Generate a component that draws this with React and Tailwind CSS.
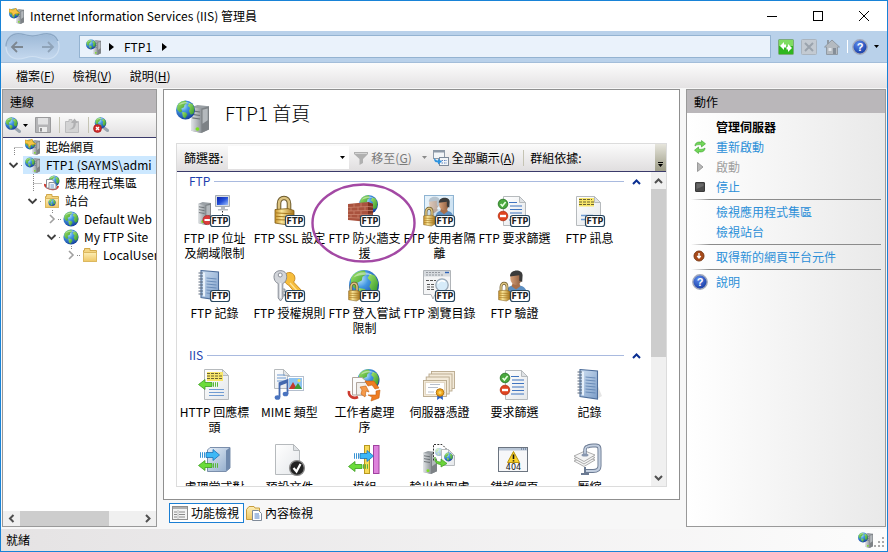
import React from "react";

/* ---------- shared drawing parts ---------- */

function Defs() {
  return (
    <svg className="absolute h-0 w-0" aria-hidden="true">
      <defs>
        <radialGradient id="sea" cx="35%" cy="28%" r="75%">
          <stop offset="0" stopColor="#c8ecfd" />
          <stop offset="0.4" stopColor="#4296e2" />
          <stop offset="1" stopColor="#153f9c" />
        </radialGradient>
        <linearGradient id="land" x1="0" y1="0" x2="1" y2="1">
          <stop offset="0" stopColor="#a4e66c" />
          <stop offset="1" stopColor="#2f9428" />
        </linearGradient>
        <linearGradient id="steel" x1="0" y1="0" x2="1" y2="0">
          <stop offset="0" stopColor="#e3e6e8" />
          <stop offset="1" stopColor="#90969b" />
        </linearGradient>
        <linearGradient id="gold" x1="0" y1="0" x2="1" y2="0">
          <stop offset="0" stopColor="#c8922a" />
          <stop offset="0.35" stopColor="#fbe79a" />
          <stop offset="1" stopColor="#a8741a" />
        </linearGradient>
        <linearGradient id="screen" x1="0" y1="0" x2="1" y2="1">
          <stop offset="0" stopColor="#0a1fa8" />
          <stop offset="0.5" stopColor="#2450d8" />
          <stop offset="1" stopColor="#9cc0ff" />
        </linearGradient>
        <linearGradient id="paper" x1="0" y1="0" x2="1" y2="1">
          <stop offset="0" stopColor="#ffffff" />
          <stop offset="1" stopColor="#e4e7ea" />
        </linearGradient>
        <linearGradient id="book" x1="0" y1="0" x2="1" y2="1">
          <stop offset="0" stopColor="#cfe0f2" />
          <stop offset="1" stopColor="#7c9dc8" />
        </linearGradient>
        <linearGradient id="folder" x1="0" y1="0" x2="0" y2="1">
          <stop offset="0" stopColor="#fdeeb5" />
          <stop offset="1" stopColor="#eec766" />
        </linearGradient>
        <linearGradient id="skin" x1="0" y1="0" x2="1" y2="0">
          <stop offset="0" stopColor="#d9a27a" />
          <stop offset="1" stopColor="#8a5a3c" />
        </linearGradient>
        <linearGradient id="bluebox" x1="0" y1="0" x2="1" y2="1">
          <stop offset="0" stopColor="#e6eef7" />
          <stop offset="1" stopColor="#8ea9ca" />
        </linearGradient>
        <radialGradient id="help" cx="40%" cy="30%" r="75%">
          <stop offset="0" stopColor="#5c8bee" />
          <stop offset="1" stopColor="#12369f" />
        </radialGradient>
        <linearGradient id="pill" x1="0" y1="0" x2="0" y2="1">
          <stop offset="0" stopColor="#9cb8d6" />
          <stop offset="1" stopColor="#c4d8ee" />
        </linearGradient>
      </defs>
    </svg>
  );
}

function Globe({ cx, cy, r }) {
  return (
    <g transform={`translate(${cx} ${cy}) scale(${r / 10})`}>
      <circle r="10" fill="url(#sea)" />
      <path d="M-8.6 -4.5 C-6.5 -8.5 -2.5 -9.8 0.5 -9.6 L1.5 -7 L-1 -5.5 L-1.5 -3 L-4.5 -1.5 L-3.5 1.5 L-6 2.5 L-8.8 -0.5 Z" fill="url(#land)" />
      <path d="M-3.5 2 L0.5 2.6 L2 5 L-0.5 9 L-2.8 7.2 Z" fill="url(#land)" />
      <path d="M4 -7.5 L7.4 -6.2 L9.4 -1.8 L8.6 3.6 L5.6 5 L3.6 1 L4.8 -2 L2.4 -4.6 Z" fill="url(#land)" />
      <path d="M-7 -5 C-4.5 -9 2 -9.5 5.5 -6.5 C2 -7.3 -3.5 -7 -7 -5 Z" fill="#fff" opacity="0.45" />
    </g>
  );
}

function Server({ x, y, w, h }) {
  return (
    <g transform={`translate(${x} ${y}) scale(${w / 14} ${h / 24})`}>
      <path d="M0 2 L5 0 L14 1 L14 21 L8 24 L0 22 Z" fill="#9aa0a5" />
      <path d="M0 2 L8 3 L8 24 L0 22 Z" fill="url(#steel)" />
      <path d="M1 5 L7 6 M1 8 L7 9 M1 11 L7 12" stroke="#6c7276" strokeWidth="1" />
      <path d="M8 3 L14 1 L14 21 L8 24 Z" fill="#7d8286" />
      <path d="M9 4 L13 3 L13 13 L9 16 Z" fill="#b4b9bd" />
      <circle cx="5" cy="20.5" r="1.5" fill="#7be01e" />
    </g>
  );
}

function Lock({ x, y, w, h }) {
  return (
    <g transform={`translate(${x} ${y}) scale(${w / 20} ${h / 30})`}>
      <path d="M5 16 V8 C5 0 15 0 15 8 V16" fill="none" stroke="#6c5a2c" strokeWidth="4.6" />
      <path d="M5 16 V8 C5 0 15 0 15 8 V16" fill="none" stroke="#dcc380" strokeWidth="2.6" />
      <path d="M1 14 L14 13 L20 15 L20 27 L14 30 L1 28 Z" fill="url(#gold)" stroke="#7c5a14" strokeWidth="0.8" />
      <path d="M2 17.5 L19 18.5 M2 21 L19 22 M2 24.5 L19 25" stroke="#a5771f" strokeWidth="1" />
    </g>
  );
}

function Sheet({ x, y, w, h }) {
  const f = 6;
  return (
    <g>
      <path d={`M${x} ${y} H${x + w - f} L${x + w} ${y + f} V${y + h} H${x} Z`} fill="url(#paper)" stroke="#b6babd" strokeWidth="1" />
      <path d={`M${x + w - f} ${y} V${y + f} H${x + w} Z`} fill="#dfe2e5" stroke="#b6babd" strokeWidth="1" />
    </g>
  );
}

function FtpBadge() {
  return (
    <g>
      <rect x="12.5" y="20.5" width="19" height="11" rx="2.5" fill="#fff" stroke="#27465f" strokeWidth="1.2" />
      <text x="22" y="29" textAnchor="middle" fontSize="8" fontWeight="700" fontFamily="'DejaVu Sans', sans-serif" fill="#222">FTP</text>
    </g>
  );
}

function Person({ x, y, s = 1, shirt = "#5d8fc2", hair = "#3b3b3b" }) {
  return (
    <g transform={`translate(${x} ${y}) scale(${s})`}>
      <path d="M-9 21 C-9 13 -5 12 0 12 C6 12 10 14 10 21 Z" fill={shirt} />
      <path d="M-3 10 L3 10 L4 13 L0 16 L-4 13 Z" fill="#a86f4a" />
      <ellipse cx="0" cy="5.5" rx="5.2" ry="6.3" fill="url(#skin)" />
      <path d="M-5.4 4 C-6 -2.5 6 -3.5 6 3 L5.6 9 L3 8 L3 3 Z" fill={hair} />
    </g>
  );
}

function GreenArrow({ x, y }) {
  return (
    <g transform={`translate(${x} ${y})`}>
      <path d="M0.5 5.5 L7 0.5 V3.5 H14 V7.5 H7 V10.5 Z" fill="#6bdc3a" stroke="#3c9c22" strokeWidth="0.8" />
      <path d="M15.5 3.2 V7.8 M17.5 3.2 V7.8 M19.5 3.2 V7.8" stroke="#58b83a" strokeWidth="1" />
    </g>
  );
}

function BlueArrow({ x, y }) {
  return (
    <g transform={`translate(${x} ${y})`}>
      <path d="M19.5 6 L13 0.5 V3.5 H6 V8.5 H13 V11.5 Z" fill="#3db8f6" stroke="#1b71b8" strokeWidth="0.8" />
      <path d="M0.5 3.2 V8.8 M2.5 3.2 V8.8 M4.5 3.2 V8.8" stroke="#3a94d4" strokeWidth="1" />
    </g>
  );
}

function Notebook({ x, y }) {
  return (
    <g transform={`translate(${x} ${y})`}>
      <path d="M17 8 L25 27 L20 30 Z" fill="#000" opacity="0.1" />
      <path d="M3 0.5 L20.5 2 V30 L3 27.5 Z" fill="url(#book)" stroke="#4d6d9a" strokeWidth="1.1" />
      <path d="M5 2.5 L7 2.8 V26.5 L5 26.2 Z" fill="#e8f1fa" />
      <path d="M8.5 8 L18.5 9 M8.5 11 L18.5 12 M8.5 14 L18.5 15 M8.5 17 L18.5 18 M8.5 20 L18.5 21 M8.5 23 L18.5 24" stroke="#5b7fae" strokeWidth="0.8" />
      <path d="M0.5 3 H5 M0.5 6 H5 M0.5 9 H5 M0.5 12 H5 M0.5 15 H5 M0.5 18 H5 M0.5 21 H5 M0.5 24 H5" stroke="#5c6a7c" strokeWidth="1.1" />
    </g>
  );
}

function CheckList({ x }) {
  return (
    <g transform={`translate(${x} 0)`}>
      <Sheet x={5.5} y={1.5} w={22} h={29} />
      <path d="M11 7.5 H19 M12 11 H24 M12 14.5 H24 M12 18 H24 M12 21.5 H24 M11 25 H24" stroke="#3f74c0" strokeWidth="1.1" />
      <circle cx="5" cy="9" r="4.8" fill="#4aa83e" stroke="#23701f" strokeWidth="0.8" />
      <path d="M2.6 9 L4.4 11 L7.6 7" fill="none" stroke="#e8ffe0" strokeWidth="1.6" />
      <circle cx="5" cy="21" r="4.8" fill="#e0431f" stroke="#b03418" strokeWidth="0.8" />
      <rect x="2" y="19.8" width="6" height="2.4" fill="#fff" />
    </g>
  );
}

/* ---------- feature icons ---------- */

const ART = {
  ipRestrict: (
    <g>
      <Server x={0} y={7} w={13} h={23} />
      <path d="M17.5 0.5 H31.5 V11.5 H17.5 Z" fill="#d8dde2" stroke="#a5acb3" />
      <rect x="19" y="2" width="11" height="8" fill="url(#screen)" />
      <path d="M23 12 H27 V14 H30 V15.5 H20 V14 H23 Z" fill="#b6bcc2" />
      <path d="M24.5 16 V21" stroke="#333" strokeDasharray="1.5 1.5" />
      <circle cx="9.5" cy="25" r="4.6" fill="#dc3c3c" stroke="#a82424" strokeWidth="0.7" />
      <rect x="6.5" y="24" width="6" height="2" fill="#fff" />
      <FtpBadge />
    </g>
  ),
  ssl: <g><Lock x={1} y={1} w={20} h={29} /><FtpBadge /></g>,
  firewall: (
    <g>
      <Globe cx={20.5} cy={9.5} r={9.5} />
      <path d="M0 9 L20 7 L25 9 V24 L20 27 L0 25 Z" fill="#a9523e" />
      <path d="M20 7 L25 9 V24 L20 27 Z" fill="#7d3222" />
      <path d="M0 12.5 L20 11.5 L25 12 M0 16 L20 15.5 L25 15.5 M0 19.5 L20 19.5 L25 19 M0 22.5 L20 23.5 L25 22 M6 8.5 V12 M13 8 V12 M3 12.5 V16 M10 12 V16 M17 12 V15.5 M6 16 V19.5 M13 16 V19.5 M3 19.5 V22.5 M10 19.5 V23" stroke="#cf8a74" strokeWidth="0.7" fill="none" />
      <FtpBadge />
    </g>
  ),
  isolation: (
    <g>
      <rect x="1.5" y="0.5" width="29" height="25" fill="#cfe3f2" stroke="#8fb4d2" />
      <path d="M2 1 H30 L18 14 H2 Z" fill="#e4f1fa" />
      <g opacity="0.5"><Person x={11} y={3} s={0.95} shirt="#c9d6e0" hair="#8a98a5" /></g>
      <Person x={21} y={4} s={0.95} />
      <Lock x={0} y={12} w={12} h={19} />
      <FtpBadge />
    </g>
  ),
  ftpFilter: <g><CheckList x={0} /><FtpBadge /></g>,
  message: (
    <g>
      <Sheet x={3.5} y={1.5} w={24} h={29} />
      <rect x="6" y="3" width="15" height="8.5" fill="#f8e66a" />
      <path d="M6 4.5 H19 M6 7 H22 M6 9.5 H22" stroke="#6b6434" strokeWidth="1" strokeDasharray="3 1" />
      <path d="M8 20.5 H20 M8 24.5 H14" stroke="#6f9bd2" strokeWidth="1.3" />
      <FtpBadge />
    </g>
  ),
  ftpLog: <g><Notebook x={0} y={0} /><FtpBadge /></g>,
  keys: (
    <g>
      <path d="M12 5 C14 1 20 2 21.5 6 C22.5 9 21.5 11 20.5 12 L30 22 L29 26 L24 25 L15.5 15 C12 14 10.5 9 12 5 Z" fill="#f6bd3c" stroke="#c4841a" strokeWidth="0.9" />
      <path d="M17 13 L26 23" stroke="#fde39a" strokeWidth="1.2" />
      <path d="M2 3 C5 -0.5 11 0 13 3.5 C14.5 7 13.5 12 9.8 13.5 V28 L7.5 31 L5.2 28 V13.5 C1 12 0 6.5 2 3 Z" fill="#d2d5da" stroke="#80858e" strokeWidth="0.9" />
      <circle cx="7.2" cy="5" r="2" fill="#fff" stroke="#80858e" strokeWidth="0.9" />
      <path d="M7.5 13 V28" stroke="#f4f5f7" strokeWidth="1.2" />
      <path d="M9.8 19 H12 V22 H9.8 M9.8 24 H11.5 V26 H9.8" fill="#c2c5ca" stroke="#80858e" strokeWidth="0.8" />
      <FtpBadge />
    </g>
  ),
  logon: <g><Globe cx={16} cy={15} r={15} /><Lock x={0} y={12} w={12} h={19} /><FtpBadge /></g>,
  browse: (
    <g>
      <path d="M0.5 0.5 H27.5 V24.5 H12 L10 29 L8 24.5 H0.5 Z" fill="#f4f5f6" stroke="#b0b4b8" />
      <rect x="1" y="1" width="26" height="5.5" fill="#d6dade" />
      <path d="M3 2.5 H17 M3 5 H20" stroke="#8d9299" strokeWidth="0.9" strokeDasharray="2 1" />
      <path d="M22 2.5 H26" stroke="#2c62b8" strokeWidth="1.4" />
      <path d="M3 10.5 H13 M4 14.5 H11 M4 17 H11 M4 19.5 H11" stroke="#555" strokeWidth="1" strokeDasharray="3 1" />
      <circle cx="19" cy="15" r="6.2" fill="#d3eafa" fillOpacity="0.9" stroke="#9aa8b6" strokeWidth="1.3" />
      <path d="M15 13.5 C16 10.5 20 10 22 12" stroke="#fff" strokeWidth="1.5" fill="none" />
      <FtpBadge />
    </g>
  ),
  auth: <g><Person x={18} y={2} s={1.1} /><Lock x={0} y={12} w={12} h={19} /><FtpBadge /></g>,
  httpHeaders: (
    <g>
      <Sheet x={6.5} y={0.5} w={24} h={30} />
      <rect x="9" y="3" width="16" height="9" fill="#f8e66a" />
      <path d="M9 4.5 H22 M9 7 H25 M9 9.5 H25" stroke="#6b6434" strokeWidth="1" strokeDasharray="3 1" />
      <path d="M11 20.5 H26 M11 23.5 H26 M11 26.5 H26" stroke="#6f9bd2" strokeWidth="1.2" />
      <GreenArrow x={0} y={10} />
    </g>
  ),
  mime: (
    <g>
      <Sheet x={1.5} y={0.5} w={15} h={19} />
      <path d="M4 6 H12 M4 9 H13 M4 12 H13" stroke="#6f9bd2" />
      <rect x="14.5" y="7.5" width="16" height="14" fill="#fff" stroke="#b4bfce" />
      <rect x="16" y="9" width="13" height="11" fill="#8dc3f0" />
      <path d="M16 20 L20 13 L24 20 Z" fill="#c43a2c" />
      <path d="M21 20 L25 14 L29 20 Z" fill="#3c9a34" />
      <circle cx="26" cy="11.5" r="1.5" fill="#fbe35a" />
      <path d="M6.5 28 V14 L14.5 11 V25" fill="none" stroke="#4468ae" strokeWidth="1.8" />
      <path d="M6.5 15.5 L14.5 12.5" stroke="#4468ae" strokeWidth="2.6" />
      <ellipse cx="4.5" cy="28.5" rx="2.8" ry="2.3" fill="#4a74c0" />
      <ellipse cx="12.5" cy="25" rx="2.8" ry="2.3" fill="#4a74c0" />
    </g>
  ),
  worker: (
    <g>
      <Globe cx={20.5} cy={11} r={11} />
      <path d="M1 22 C0 28 6 30 10 28" fill="none" stroke="#cc3a2e" strokeWidth="2.6" />
      <path d="M4.5 8.5 H14 L18 12 V26 H4.5 Z" fill="#fbfbfb" stroke="#b0a59c" />
      <path d="M8.5 13.5 H18 L20 16 V26 H8.5 Z" fill="#f1efec" stroke="#b0a59c" />
      <circle cx="22" cy="21.5" r="6" fill="#fff" />
      <path d="M17 12 L26 12 L31 19 L27 20 L24 16 L20 17 Z" fill="#ef7d22" stroke="#c4600f" strokeWidth="0.6" />
      <path d="M32 21 L31 29 L23 32 L24 28 L20 26 L28 26 L28 22 Z" fill="#ef7d22" stroke="#c4600f" strokeWidth="0.6" />
      <path d="M12 18 L18 17 L21 23 L18 22 L17 28 L13 25 L14 21 Z" fill="#f59a4a" stroke="#c4600f" strokeWidth="0.6" />
    </g>
  ),
  certs: (
    <g fill="#f3ead9" stroke="#b8a88c" strokeWidth="0.9">
      <rect x="8.5" y="2.5" width="23" height="17" />
      <rect x="6" y="5" width="23" height="17" />
      <rect x="3.2" y="8" width="23" height="17" />
      <rect x="0.5" y="11.5" width="23" height="16" />
      <rect x="2.5" y="13.5" width="19" height="12" fill="#fff" stroke="#e0d6c2" />
      <path d="M7 15.5 H17 M5 18.5 H15 M5 23 H11" stroke="#b0b8c6" />
      <path d="M14.5 25 L14 31 L17 29 L20 31 L19.5 25 Z" fill="#2b63c6" stroke="none" />
      <circle cx="17" cy="23.5" r="3.8" fill="#f0a81e" stroke="#b06c08" />
      <circle cx="17" cy="23.5" r="1.5" fill="#fbd56a" stroke="none" />
    </g>
  ),
  filter: <CheckList x={2} />,
  log: <Notebook x={4} y={0} />,
  handler: (
    <g>
      <path d="M9.5 6 L12 3.5 H32 V24 L28 27.5 H9.5 Z" fill="url(#bluebox)" stroke="#7b8fac" />
      <path d="M28 6.5 V27 L32 24 V3.5 Z" fill="#6f89ad" />
      <BlueArrow x={2} y={5} />
      <GreenArrow x={0} y={16} />
    </g>
  ),
  defaultDoc: (
    <g>
      <Sheet x={2.5} y={0.5} w={24} h={30} />
      <circle cx="24" cy="24" r="7.4" fill="#222" stroke="#8b8b8b" strokeWidth="1.4" />
      <path d="M20.5 24 L23.5 27.5 L27.5 20" fill="none" stroke="#fff" strokeWidth="2.2" />
    </g>
  ),
  modules: (
    <g>
      <rect x="16.5" y="1.5" width="5" height="28" fill="#f7da58" stroke="#b8981e" />
      <rect x="25.5" y="1.5" width="5.5" height="28" fill="#de82dc" stroke="#a042a0" />
      <BlueArrow x={6} y={6} />
      <GreenArrow x={0} y={17} />
    </g>
  ),
  cache: (
    <g>
      <Server x={0} y={7} w={14} h={23} />
      <path d="M10.5 16.5 V0.5 H19 L23.5 5 V8" fill="#fff" stroke="#333" strokeDasharray="2 1.3" />
      <g opacity="0.4"><Globe cx={16} cy={8} r={4} /></g>
      <Sheet x={18.5} y={5.5} w={13} h={16} />
      <Globe cx={25.5} cy={13} r={4.4} />
      <path d="M12 13 C12 17 15 18 18 18 V15 L24 19.5 L18 23 V20.5 C14 20.5 11 18 12 13 Z" fill="#6bd33a" stroke="#3c9c22" strokeWidth="0.7" />
    </g>
  ),
  error404: (
    <g>
      <rect x="0.5" y="3.5" width="29" height="24" fill="#f6f7f9" stroke="#6b7480" />
      <rect x="1" y="4" width="28" height="2.5" fill="#b9c6d6" />
      <path d="M23 5 H28" stroke="#445a7c" strokeDasharray="1 1" />
      <path d="M15.5 7.5 L21.5 18.5 H9.5 Z" fill="#fbd32c" stroke="#b8940f" strokeLinejoin="round" />
      <path d="M15.5 10.5 V15 M15.5 16.2 V17.5" stroke="#111" strokeWidth="1.6" />
      <text x="15.5" y="26" textAnchor="middle" fontSize="8" fontFamily="'DejaVu Sans', sans-serif" fill="#111">404</text>
    </g>
  ),
  compress: (
    <g>
      <path d="M14 3.5 C15 1.5 18 1.5 20 1.5 H23 C26.5 1.5 26.5 4 26.5 7 V22 C26.5 26 24 27 20 27 H12" fill="none" stroke="#6b7a92" strokeWidth="4" />
      <path d="M14 3.5 C15 1.5 18 1.5 20 1.5 H23 C26.5 1.5 26.5 4 26.5 7 V22 C26.5 26 24 27 20 27 H12" fill="none" stroke="#c3cfe0" strokeWidth="2.2" />
      <g fill="#f4f4f4" stroke="#9a9a9a" strokeWidth="0.8">
        <path d="M1 17 L12 12 L22 16 L11 22.5 Z" />
        <path d="M1 14.5 L12 9.5 L22 13.5 L11 20 Z" />
        <path d="M1 12 L12 7 L22 11 L11 17.5 Z" />
      </g>
      <path d="M12 11 V6 C12 4 13 3 14 2.5" fill="none" stroke="#6b7a92" strokeWidth="3.4" />
      <path d="M12 11 V6 C12 4 13 3 14 2.5" fill="none" stroke="#c3cfe0" strokeWidth="1.8" />
      <ellipse cx="12" cy="11" rx="3.5" ry="1.6" fill="#8796ae" />
      <path d="M12 23 V31 M8 30 H16" stroke="#6b7a92" strokeWidth="2" />
    </g>
  ),
};

const FTP_FEATURES = [
  ["ipRestrict", "FTP IP 位址", "及網域限制"],
  ["ssl", "FTP SSL 設定"],
  ["firewall", "FTP 防火牆支", "援"],
  ["isolation", "FTP 使用者隔", "離"],
  ["ftpFilter", "FTP 要求篩選"],
  ["message", "FTP 訊息"],
  ["ftpLog", "FTP 記錄"],
  ["keys", "FTP 授權規則"],
  ["logon", "FTP 登入嘗試", "限制"],
  ["browse", "FTP 瀏覽目錄"],
  ["auth", "FTP 驗證"],
];

const IIS_FEATURES = [
  ["httpHeaders", "HTTP 回應標", "頭"],
  ["mime", "MIME 類型"],
  ["worker", "工作者處理", "序"],
  ["certs", "伺服器憑證"],
  ["filter", "要求篩選"],
  ["log", "記錄"],
  ["handler", "處理常式對"],
  ["defaultDoc", "預設文件"],
  ["modules", "模組"],
  ["cache", "輸出快取處"],
  ["error404", "錯誤網頁"],
  ["compress", "壓縮"],
];

/* ---------- small 16px icons ---------- */

function Icon16({ children }) {
  return <svg viewBox="0 0 16 16" className="h-4 w-4 shrink-0" aria-hidden="true">{children}</svg>;
}

const ServerIcon = ({ star }) => (
  <Icon16>
    <Server x={7} y={1} w={8} h={15} />
    <Globe cx={5} cy={5.5} r={5} />
    {star && <path d="M0 1 L4 2 L7 0 L8 3 L11 5 L6 6 L4 8 L3 5 L0 4 Z" fill="#f6c544" stroke="#c98d14" strokeWidth="0.6" />}
  </Icon16>
);
const PoolIcon = () => (
  <Icon16>
    <Globe cx={10} cy={6} r={5.5} />
    <path d="M1 9 C0 14 14 17 14 11" fill="none" stroke="#cf3b32" strokeWidth="2" />
    <path d="M2.5 4.5 H8 L10 6.5 V13 H2.5 Z" fill="#fff" stroke="#8a8f96" />
    <path d="M5 7.5 H10 L12 9.5 V14 H5 Z" fill="#f4f6f8" stroke="#8a8f96" />
    <path d="M6.5 10 H10 M6.5 12 H10" stroke="#6f9bd2" />
  </Icon16>
);
const FolderIcon = ({ globe }) => (
  <Icon16>
    <path d="M1.5 3.5 H2.5 V1.5 H8 V3.5 H14.5 V14.5 H1.5 Z" fill="#f4d581" stroke="#d1a94c" />
    <path d="M1.5 5.5 H14.5 V14.5 H1.5 Z" fill="url(#folder)" stroke="#dcb860" />
    {globe && <Globe cx={8} cy={9.5} r={3.6} />}
  </Icon16>
);
const GlobeIcon = () => <Icon16><Globe cx={8} cy={8} r={7.6} /></Icon16>;
const HelpIcon = () => (
  <Icon16>
    <circle cx="8" cy="8" r="7.2" fill="url(#help)" stroke="#a3aabb" strokeWidth="1.4" />
    <text x="8" y="12" textAnchor="middle" fontSize="11" fontWeight="700" fontFamily="'Liberation Sans', sans-serif" fill="#fff">?</text>
  </Icon16>
);
const ConnectIcon = () => (
  <Icon16>
    <path d="M10 11 L14.5 14.5" stroke="#9aa5b0" strokeWidth="3" strokeLinecap="round" />
    <Globe cx={6.5} cy={6.5} r={6.3} />
  </Icon16>
);
const DisconnectIcon = () => (
  <Icon16>
    <path d="M10 10 L14.5 13.5" stroke="#9aa5b0" strokeWidth="3" strokeLinecap="round" />
    <Globe cx={7.5} cy={6} r={5.8} />
    <circle cx="4.5" cy="11.5" r="4" fill="#d22b2b" stroke="#961515" strokeWidth="0.6" />
    <path d="M3 10 L6 13 M6 10 L3 13" stroke="#fff" strokeWidth="1.4" />
  </Icon16>
);
const SaveIcon = () => (
  <Icon16>
    <path d="M0.5 0.5 H15.5 V15.5 H0.5 Z" fill="#b4b4b6" stroke="#9a9a9c" />
    <rect x="3" y="1" width="10" height="6.5" fill="#e2e2e3" />
    <rect x="4" y="10" width="8" height="5" fill="#ececec" />
    <rect x="5" y="11" width="2" height="3.5" fill="#8f8f91" />
  </Icon16>
);
const UpIcon = () => (
  <Icon16>
    <path d="M1.5 4.5 H5 V2.5 H8 V4.5 H14.5 V15.5 H1.5 Z" fill="#d3d3d4" stroke="#bcbcbe" />
    <path d="M4 12 C8 12 9.5 10 9.5 6 H7 L10.5 1.5 L14 6 H11.8 C11.8 11 9 13.5 4 12 Z" fill="#b0b0b2" />
  </Icon16>
);
const Triangle = () => (
  <svg viewBox="0 0 5 8" className="h-2 w-[5px] shrink-0" aria-hidden="true"><path d="M0 0 L5 4 L0 8 Z" fill="#000" /></svg>
);
const DownArrow = ({ gray }) => (
  <svg viewBox="0 0 5 3" className="h-[3px] w-[5px] shrink-0" aria-hidden="true"><path d="M0 0 H5 L2.5 3 Z" fill={gray ? "#8a8a8a" : "#000"} /></svg>
);
const PATHS = { up: "M1 7 L4.5 3.5 L8 7", down: "M1 3 L4.5 6.5 L8 3", left: "M6.5 1 L3 4.5 L6.5 8", right: "M3 1 L6.5 4.5 L3 8" };
const Chevron = ({ dir, color = "#505050" }) => (
  <svg viewBox="0 0 9 9" className="h-[9px] w-[9px]" aria-hidden="true"><path d={PATHS[dir]} fill="none" stroke={color} strokeWidth="2" /></svg>
);

/* ---------- tree ---------- */

const TREE = [
  { pad: "pl-1", node: "corner", icon: <ServerIcon star />, text: "起始網頁" },
  { pad: "pl-1", node: "open", icon: <ServerIcon />, text: "FTP1 (SAYMS\\admi", selected: true },
  { pad: "pl-[23px]", node: "tee", icon: <PoolIcon />, text: "應用程式集區" },
  { pad: "pl-[23px]", node: "open", icon: <FolderIcon globe />, text: "站台" },
  { pad: "pl-[42px]", node: "closed", icon: <GlobeIcon />, text: "Default Web" },
  { pad: "pl-[42px]", node: "open", icon: <GlobeIcon />, text: "My FTP Site" },
  { pad: "pl-[61px]", node: "closed", icon: <FolderIcon />, text: "LocalUser" },
];

function TreeNode({ kind }) {
  return (
    <svg viewBox="0 0 16 18" className="h-[18px] w-4 shrink-0" aria-hidden="true">
      {kind === "corner" && <path d="M7.5 9.5 H16 M7.5 10 V18" stroke="#888" strokeDasharray="1 1" fill="none" />}
      {kind === "tee" && <path d="M7.5 9.5 H16 M7.5 0 V18" stroke="#888" strokeDasharray="1 1" fill="none" />}
      {kind === "open" && <path d="M14 9.5 H16" stroke="#888" strokeDasharray="1 1" />}
      {kind === "closed" && <path d="M7.5 0 V3 M13 9.5 H16" stroke="#888" strokeDasharray="1 1" />}
      {kind === "open" && <path d="M2.5 7 L6.5 11 L10.5 7" fill="none" stroke="#404040" strokeWidth="1.8" />}
      {kind === "closed" && <path d="M5 5 L9 9 L5 13" fill="none" stroke="#a0a0a0" strokeWidth="1.6" />}
    </svg>
  );
}

function PanelTitle({ children }) {
  return <h2 className="h-[23px] shrink-0 bg-[#bab7ba] pl-[7px] text-xs leading-[23px]">{children}</h2>;
}

function Connections() {
  return (
    <aside className="flex w-[155px] shrink-0 flex-col border border-[#999] bg-white">
      <PanelTitle>連線</PanelTitle>
      <div className="flex h-[25px] shrink-0 items-center gap-1 border-b border-[#3a3a6a] bg-gradient-to-b from-[#fbfbfb] to-[#e2e0e1] pl-0.5">
        <button aria-label="連線" className="flex items-center gap-0.5"><ConnectIcon /><DownArrow /></button>
        <button aria-label="儲存" className="ml-[3px]"><SaveIcon /></button>
        <span className="ml-1 h-4 w-px bg-[#c5c4b4]" />
        <button aria-label="向上"><UpIcon /></button>
        <span className="ml-1 h-4 w-px bg-[#c5c4b4]" />
        <button aria-label="中斷連線"><DisconnectIcon /></button>
      </div>
      <ul className="min-h-0 flex-1 overflow-hidden">
        {TREE.map((row) => (
          <li key={row.text} className={`flex h-[18px] ${row.pad}`}>
            <TreeNode kind={row.node} />
            <span className={`flex min-w-0 flex-1 items-center gap-[5px] overflow-hidden whitespace-nowrap pl-0.5 ${row.selected ? "bg-[#cce8ff]" : ""}`}>
              {row.icon}{row.text}
            </span>
          </li>
        ))}
      </ul>
      <div className="flex h-[15px] shrink-0 items-center bg-[#f0f0f0]">
        <button aria-label="向左捲動" className="flex w-[17px] justify-center"><Chevron dir="left" /></button>
        <div className="h-full flex-1"><div className="h-full w-3/4 bg-[#cdcdcd]" /></div>
        <button aria-label="向右捲動" className="flex w-[17px] justify-center"><Chevron dir="right" /></button>
      </div>
    </aside>
  );
}

/* ---------- feature view ---------- */

function Feature({ art, lines }) {
  return (
    <li className="relative h-[75px]">
      <button className="flex w-full flex-col items-center">
        <svg viewBox="0 0 33 32" className="h-8 w-[33px] overflow-visible" aria-hidden="true">{ART[art]}</svg>
        <span className="mt-[3px] flex flex-col items-center whitespace-nowrap leading-[15px]">
          {lines.map((l) => <span key={l}>{l}</span>)}
        </span>
      </button>
      {art === "firewall" && (
        <svg viewBox="0 0 106 80" className="pointer-events-none absolute left-1/2 top-[-12px] z-10 h-20 w-[106px] -translate-x-1/2 overflow-visible" aria-hidden="true">
          <ellipse cx="51.5" cy="40" rx="51" ry="38.5" fill="none" stroke="#a349a4" strokeWidth="2.4" />
        </svg>
      )}
    </li>
  );
}

function Group({ name, items }) {
  return (
    <section className="mb-px">
      <div className="flex h-[18px] items-center gap-1 pl-3 pr-[10px]">
        <h3 className="text-[#1e3fae]">{name}</h3>
        <span className="mr-1 h-px flex-1 bg-[#a9badf]" />
        <button aria-label="摺疊"><Chevron dir="up" color="#0a2f92" /></button>
      </div>
      <ul className="grid grid-cols-[repeat(auto-fill,75px)] pt-[5px]">
        {items.map(([art, ...lines]) => <Feature key={art} art={art} lines={lines} />)}
      </ul>
    </section>
  );
}

function Home() {
  return (
    <div className="flex min-h-0 flex-1 flex-col border border-[#8f8f8f] bg-white px-3 pb-3">
      <div className="flex h-[53px] shrink-0 items-center gap-4">
        <svg viewBox="0 0 33 33" className="h-[33px] w-[33px]" aria-hidden="true">
          <Server x={15} y={5} w={18} h={28} />
          <Globe cx={9.5} cy={10} r={9.5} />
        </svg>
        <h1 className="pb-2 text-[19px] font-light">FTP1 首頁</h1>
      </div>
      <div className="flex min-h-0 flex-1 flex-col border border-[#dcdcdc]">
        <div className="flex h-7 shrink-0 items-center whitespace-nowrap border-b border-[#3a3a6a] bg-gradient-to-b from-[#fbfbfb] to-[#e0dedf] pl-[7px]">
          <label htmlFor="filter">篩選器:</label>
          <div className="ml-[5px] flex h-[23px] w-[121px] items-center bg-white">
            <input id="filter" className="min-w-0 flex-1 bg-transparent px-1 outline-none" />
            <button aria-label="開啟篩選清單" className="px-1"><DownArrow /></button>
          </div>
          <button className="ml-1 flex items-center gap-0.5 text-[#7a7a7a]">
            <Icon16><path d="M1 2 H15 V4 L10 9 V13 L6.5 15 V9 L1 4 Z" fill="#b0b0b0" /><path d="M2 3.5 H14" stroke="#d4d4d4" /></Icon16>
            <span>移至(<u>G</u>)</span>
          </button>
          <button aria-label="移至選項" className="ml-[10px]"><DownArrow gray /></button>
          <button className="ml-[6px] flex items-center gap-[3px]">
            <Icon16>
              <rect x="0.5" y="0.5" width="11" height="8" fill="#f2f5f8" stroke="#8e9aa8" />
              <rect x="0.5" y="0.5" width="11" height="2" fill="#8e9aa8" />
              <rect x="6.5" y="7.5" width="9" height="8" fill="#f2f5f8" stroke="#7d8a9a" />
              <path d="M8.5 10.5 H14 M8.5 13 H14" stroke="#5b83c0" strokeDasharray="1.5 1" />
              <path d="M1 8 C1 12 3 12.5 5 12.5 V14.5 L9 11.5 L5 8.8 V10.5 C3.5 10.5 3 10 1 8 Z" fill="#2d93df" />
            </Icon16>
            <span>全部顯示(<u>A</u>)</span>
          </button>
          <span className="ml-2 h-4 w-px bg-[#c5c4b4]" />
          <span className="ml-[6px] flex-1">群組依據:</span>
          <button aria-label="更多" className="flex h-full w-[11px] flex-col items-center justify-end gap-px bg-gradient-to-b from-[#e6e5dc] to-[#9d9c86] pb-1">
            <span className="h-px w-[5px] bg-black" /><DownArrow />
          </button>
        </div>
        <div className="flex min-h-0 flex-1">
          <div className="min-w-0 flex-1 overflow-hidden">
            <Group name="FTP" items={FTP_FEATURES} />
            <Group name="IIS" items={IIS_FEATURES} />
          </div>
          <div className="flex w-[15px] flex-col items-center bg-[#f0f0f0]">
            <button aria-label="向上捲動" className="flex h-[17px] items-center"><Chevron dir="up" /></button>
            <div className="w-full flex-1"><div className="h-[60%] w-full bg-[#cdcdcd]" /></div>
            <button aria-label="向下捲動" className="flex h-[17px] items-center"><Chevron dir="down" /></button>
          </div>
        </div>
      </div>
    </div>
  );
}

function ViewTabs() {
  return (
    <nav className="mt-[2px] flex h-[21px] items-center gap-0.5 pl-[6px]">
      <button className="flex h-5 items-center gap-[3px] border border-[#1b7fd4] bg-white px-0.5 pr-1">
        <Icon16>
          <rect x="0.5" y="1.5" width="15" height="13" fill="#f3f3f3" stroke="#8e8e8e" />
          <path d="M1 3 H15" stroke="#b0b0b0" strokeWidth="2" />
          <path d="M2 7 H5 M2 9.5 H5 M2 12 H5 M7 7 H13 M7 9.5 H13 M7 12 H13" stroke="#8a8a8a" />
          <path d="M6 5 V14" stroke="#bbb" />
        </Icon16>
        功能檢視
      </button>
      <button className="flex h-5 items-center gap-[3px]">
        <Icon16>
          <path d="M0.5 4.5 L3 1.5 H8 L9 3 H13.5 V14.5 H0.5 Z" fill="url(#folder)" stroke="#c79c3c" />
          <path d="M6.5 5.5 H12.5 L15.5 8.5 V15.5 H6.5 Z" fill="#fff" stroke="#7f8b99" />
          <path d="M8.5 9 H13 M8.5 11 H13.5 M8.5 13 H13.5" stroke="#4c7fc6" />
        </Icon16>
        內容檢視
      </button>
    </nav>
  );
}

/* ---------- actions ---------- */

function Action({ icon, children }) {
  return (
    <a href="#" className="flex h-5 items-center gap-2 text-[#2b8fd8]">
      <span className="flex w-4 justify-center">{icon}</span>{children}
    </a>
  );
}

function Rule() {
  return <div className="my-0.5 h-px bg-gradient-to-r from-transparent via-[#8b8b8b] via-10% to-[#8b8b8b]" />;
}

function Actions() {
  return (
    <aside className="flex w-[200px] shrink-0 flex-col border border-[#999] bg-gradient-to-r from-white to-[#e9e9e9]">
      <PanelTitle>動作</PanelTitle>
      <div className="px-1 pt-1">
        <div className="pl-px">
          <h3 className="h-5 pl-6 font-bold leading-5">管理伺服器</h3>
          <Action icon={
            <Icon16>
              <path d="M3 7 C3 3.5 6 2.5 9.5 3.3 V1.5 L13.5 4.8 L9.5 8 V6 C7 5.3 4.8 5.5 3 7 Z" fill="#72d858" stroke="#3aa02e" strokeWidth="0.6" />
              <path d="M13 9 C13 12.5 10 13.5 6.5 12.7 V14.5 L2.5 11.2 L6.5 8 V10 C9 10.7 11.2 10.5 13 9 Z" fill="#72d858" stroke="#3aa02e" strokeWidth="0.6" />
            </Icon16>
          }>重新啟動</Action>
          <button disabled className="flex h-5 items-center gap-2 text-[#a0a0a0]">
            <Icon16><path d="M5.5 3.5 L11 8 L5.5 12.5 Z" fill="#b8b8b8" stroke="#9a9a9a" /></Icon16>啟動
          </button>
          <Action icon={<Icon16><rect x="3.5" y="3.5" width="9" height="9" rx="0.5" fill="#4c4c4c" stroke="#3a3a3a" /><path d="M4.5 4.5 H11.5 V7 L4.5 10 Z" fill="#686868" /></Icon16>}>停止</Action>
        </div>
        <Rule />
        <div className="pl-px">
          <Action>檢視應用程式集區</Action>
          <Action>檢視站台</Action>
        </div>
        <Rule />
        <div className="pl-px">
          <Action icon={<svg viewBox="0 0 16 16" className="mr-[3px] h-4 w-4 shrink-0" aria-hidden="true"><circle cx="8" cy="7" r="5" fill="#a84a1a" stroke="#7c3a16" /><path d="M8 4 V8.5 M6.2 7 L8 9 L9.8 7" stroke="#fff" strokeWidth="1.4" fill="none" /></svg>}>取得新的網頁平台元件</Action>
        </div>
        <Rule />
        <div className="pl-px"><Action icon={<HelpIcon />}>說明</Action></div>
      </div>
    </aside>
  );
}

/* ---------- window ---------- */

export default function App() {
  return (
    <div className="flex h-screen flex-col border border-[#1883d7] bg-[#f7f7f7] font-['Noto_Sans_CJK_TC','Liberation_Sans',sans-serif] text-xs text-black">
      <Defs />
      <header className="flex h-[30px] shrink-0 items-center bg-white pl-2">
        <ServerIcon star />
        <span className="ml-[5px] flex-1">Internet Information Services (IIS) 管理員</span>
        <button aria-label="最小化" className="flex w-[46px] justify-center"><svg viewBox="0 0 10 10" className="h-[10px] w-[10px]"><path d="M0 5.5 H10" stroke="#000" /></svg></button>
        <button aria-label="最大化" className="flex w-[46px] justify-center"><svg viewBox="0 0 10 10" className="h-[10px] w-[10px]"><rect x="0.5" y="0.5" width="9" height="9" fill="none" stroke="#000" /></svg></button>
        <button aria-label="關閉" className="flex w-[46px] justify-center"><svg viewBox="0 0 10 10" className="h-[10px] w-[10px]"><path d="M0 0 L10 10 M10 0 L0 10" stroke="#000" /></svg></button>
      </header>

      <div className="flex h-8 shrink-0 items-center border-b border-[#a3bdd9] bg-[#b9d1ea] pl-1 pr-2">
        <div className="relative flex h-[27px] w-[55px] items-center justify-between px-[5px]">
          <svg viewBox="0 0 55 27" className="absolute inset-0 h-full w-full" aria-hidden="true">
            <path d="M13 0.8 C20 0.8 21 3 27.5 3 C34 3 35 0.8 42 0.8 C49 0.8 54 6.5 54 13.5 C54 20.5 49 26 42 26 C35 26 34 23.5 27.5 23.5 C21 23.5 20 26 13 26 C6 26 1 20.5 1 13.5 C1 6.5 6 0.8 13 0.8 Z" fill="url(#pill)" stroke="#cfe0f2" strokeWidth="1.2" />
            <path d="M1 13.5 C1 6.5 6 0.8 13 0.8 C20 0.8 21 3 27.5 3 C34 3 35 0.8 42 0.8 C47 0.8 51 3.5 53 8" fill="none" stroke="#8ba7c5" strokeWidth="1.4" />
          </svg>
          <button aria-label="上一頁" className="relative"><svg viewBox="0 0 14 12" className="h-3 w-[14px]"><path d="M13 6 H2 M7 1 L2 6 L7 11" fill="none" stroke="#7d8791" strokeWidth="1.8" /></svg></button>
          <button aria-label="下一頁" className="relative"><svg viewBox="0 0 14 12" className="h-3 w-[14px]"><path d="M1 6 H12 M7 1 L12 6 L7 11" fill="none" stroke="#8fa3b8" strokeWidth="1.8" /></svg></button>
        </div>
        <div className="ml-[19px] flex h-[23px] flex-1 items-center border border-[#94b3d1] bg-[#eaf2fb] pl-1.5">
          <ServerIcon />
          <span className="ml-[7px] flex"><Triangle /></span>
          <span className="ml-[10px]">FTP1</span>
          <span className="ml-[10px] flex"><Triangle /></span>
        </div>
        <div className="flex items-center gap-[7px] pl-[7px]">
          <button aria-label="重新整理">
            <Icon16>
              <rect x="0.5" y="0.5" width="15" height="15" rx="1" fill="#2fb61f" stroke="#7bab7a" />
              <rect x="1" y="1" width="14" height="6" fill="#7fdc62" />
              <path d="M2 7 L6 3 V5.5 H8 V8.5 H6 V11 Z" fill="#fff" />
              <path d="M14 9 L10 13 V10.5 H8.5 V7.5 H10 V5 Z" fill="#fff" />
            </Icon16>
          </button>
          <button aria-label="停止載入">
            <Icon16><rect x="0.5" y="0.5" width="15" height="15" rx="1" fill="#c3cad2" stroke="#aab4be" /><path d="M4 4 L12 12 M12 4 L4 12" stroke="#9aa3ad" strokeWidth="2" /></Icon16>
          </button>
          <button aria-label="首頁">
            <Icon16><path d="M0.5 8 L8 1 L15.5 8 H13.5 V15.5 H2.5 V8 Z" fill="#b4bac0" stroke="#909aa4" /><rect x="9" y="9" width="3" height="6" fill="#858e98" /><rect x="4.5" y="9" width="3" height="3" fill="#dfe4e9" /><rect x="3" y="1" width="2" height="4" fill="#909aa4" /></Icon16>
          </button>
          <span className="h-[13px] w-px bg-white" />
          <button aria-label="說明" className="-ml-[3px] flex items-center gap-[6px]"><HelpIcon /><DownArrow /></button>
        </div>
      </div>

      <nav className="flex h-[25px] shrink-0 items-center gap-[18px] bg-gradient-to-b from-[#fcfcfc] to-[#e4e2e3] pl-[15px]">
        <button>檔案(<u>F</u>)</button>
        <button>檢視(<u>V</u>)</button>
        <button>說明(<u>H</u>)</button>
      </nav>

      <main className="flex min-h-0 flex-1 gap-[6px] px-px pt-px">
        <Connections />
        <div className="flex min-w-0 flex-1 flex-col">
          <Home />
          <ViewTabs />
          <div className="h-1 shrink-0" />
        </div>
        <Actions />
      </main>

      <footer className="mt-0.5 flex h-[22px] shrink-0 items-center justify-between bg-gradient-to-r from-[#e5e3e4] to-[#fcfcfc] pl-[5px] pr-0.5">
        <span>就緒</span>
        <span className="flex items-end">
          <ServerIcon />
          <svg viewBox="0 0 11 11" className="h-[11px] w-[11px]" aria-hidden="true">
            <path d="M8 0 h2 v2 h-2z M4 4 h2 v2 h-2z M8 4 h2 v2 h-2z M0 8 h2 v2 h-2z M4 8 h2 v2 h-2z M8 8 h2 v2 h-2z" fill="#a9a9a9" />
          </svg>
        </span>
      </footer>
    </div>
  );
}
